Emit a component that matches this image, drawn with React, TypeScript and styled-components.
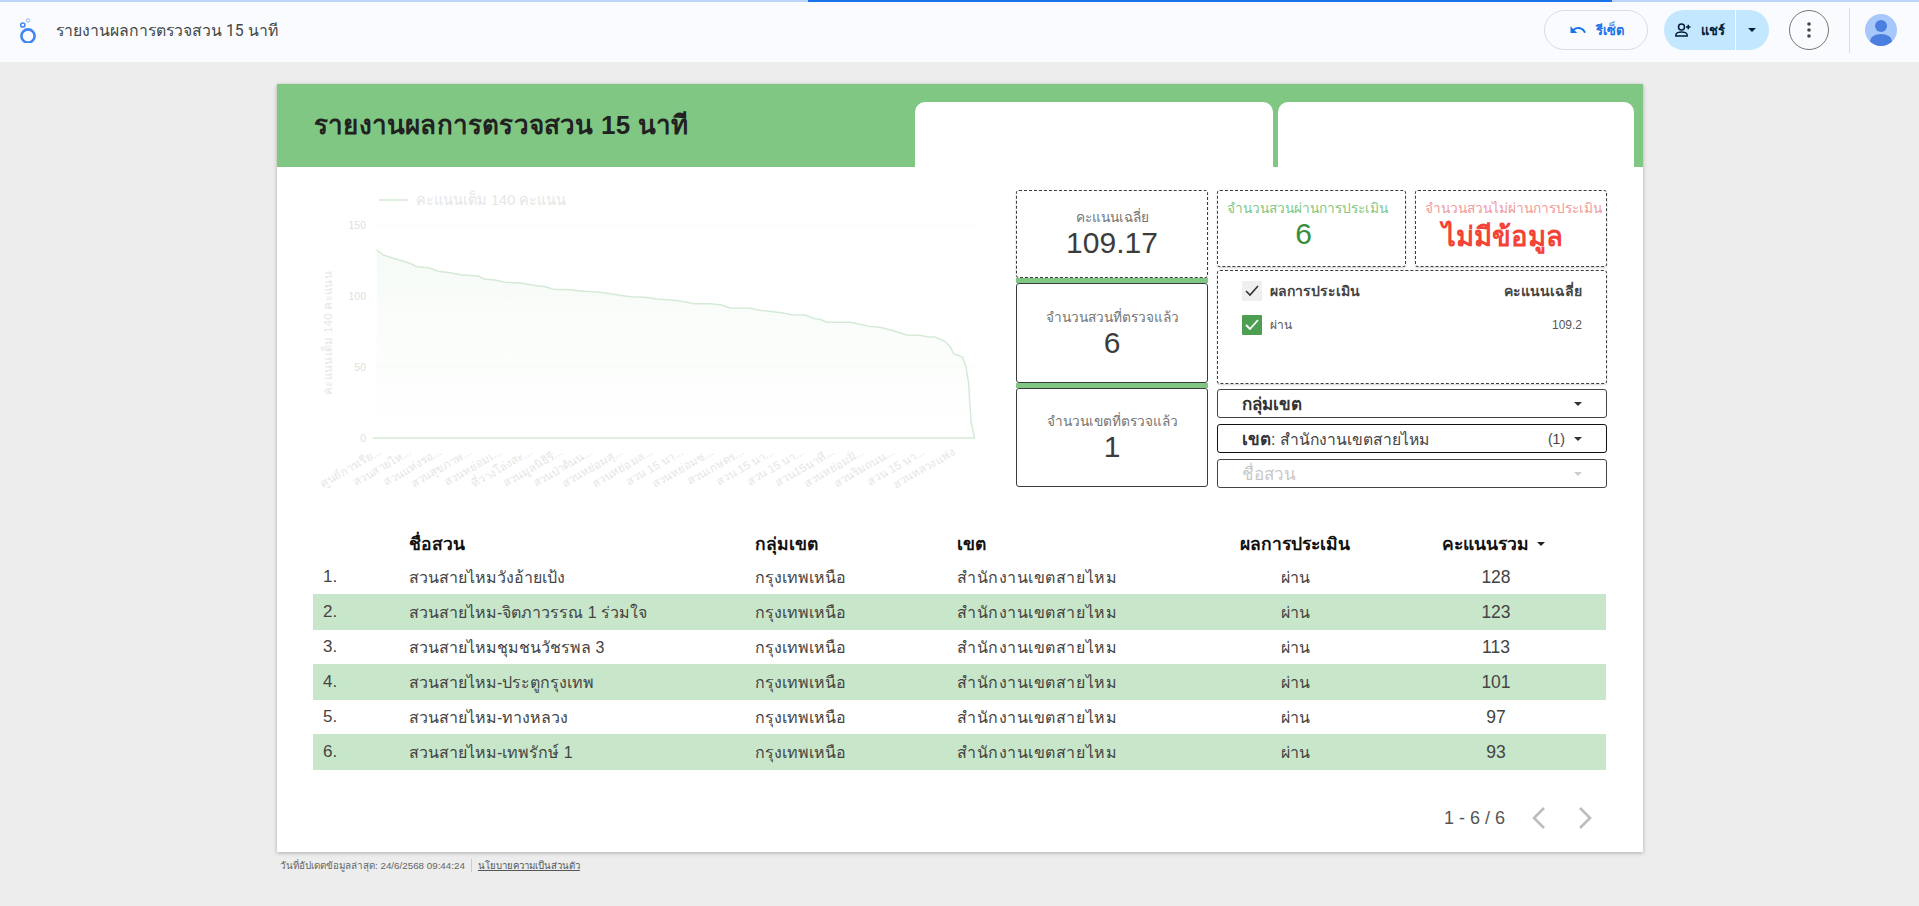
import React from "react";
import styled, { createGlobalStyle } from "styled-components";

const GlobalStyle = createGlobalStyle`
  html, body {
    margin: 0;
    padding: 0;
    height: 100%;
    overflow: hidden;
    background: #ededed;
    font-family: "Liberation Sans", Arial, sans-serif;
  }
  * {
    box-sizing: border-box;
  }
`;

const rows = [
  { name: "สวนสายไหมวังอ้ายเป้ง", score: 128 },
  { name: "สวนสายไหม-จิตภาวรรณ 1 ร่วมใจ", score: 123 },
  { name: "สวนสายไหมชุมชนวัชรพล 3", score: 113 },
  { name: "สวนสายไหม-ประตูกรุงเทพ", score: 101 },
  { name: "สวนสายไหม-ทางหลวง", score: 97 },
  { name: "สวนสายไหม-เทพรักษ์ 1", score: 93 },
];

const axisLabels = [
  "ศูนย์การเรีย...",
  "สวนสายไห...",
  "สวนแห่งรอ...",
  "สวนสุขภาพ...",
  "สวนหย่อมเ...",
  "ที่ว่างโล่งสะ...",
  "สวนมูลนิธิรี...",
  "สวนป่าต้นน...",
  "สวนหย่อมสุ...",
  "สวนหย่อมล...",
  "สวน 15 นา...",
  "สวนหย่อมซ...",
  "สวนเกษตร...",
  "สวน 15 นา...",
  "สวน 15 นา...",
  "สวน15นาที...",
  "สวนหย่อมฝั่...",
  "สวนริมถนน...",
  "สวน 15 นา...",
  "สวนหลวงแพ่ง",
];

// curve read off the reference at 3x, then moved into svg coordinates
const curveLeft: [number, number][] = [
  [20, 30], [40, 45], [70, 55], [120, 70], [140, 80], [175, 83], [205, 94], [245, 99],
  [275, 105], [325, 108], [345, 118], [375, 120], [405, 127], [445, 128], [490, 136],
  [525, 140], [550, 148], [600, 149], [640, 154], [690, 157], [740, 164], [780, 170],
  [825, 172], [860, 177], [905, 180],
];
const curveRight: [number, number][] = [
  [0, 63], [45, 71], [90, 71], [125, 75], [150, 84], [210, 85], [240, 91], [280, 95],
  [310, 99], [335, 104], [375, 105], [405, 116], [420, 118], [440, 127], [510, 127],
  [540, 133], [565, 139], [600, 142], [640, 152], [680, 165], [720, 166], [740, 170],
  [765, 171], [795, 184], [810, 200], [822, 222], [835, 226], [848, 232], [858, 260],
  [866, 310], [870, 380], [874, 430], [884, 475],
];
const curve = [
  ...curveLeft.map(([x, y]) => [60 + x / 3, 50 + y / 3]),
  ...curveRight.map(([x, y]) => [370 + x / 3, 90 + y / 3]),
];

const linePath = curve
  .map(([x, y], i) => `${i ? "L" : "M"}${x.toFixed(1)} ${y.toFixed(1)}`)
  .join(" ");
const areaPath = `${linePath} L66.7 248 Z`;

const PageRoot = styled.div`
  height: 906px;
  display: flex;
  flex-direction: column;
`;

const TopBar = styled.header`
  position: relative;
  height: 62px;
  flex: none;
  display: flex;
  align-items: center;
  padding: 0 22px 2px 18px;
  background: #f9fbfe;
`;

const Progress = styled.div`
  position: absolute;
  top: 0;
  left: 0;
  right: 0;
  height: 2px;
  background: linear-gradient(
    to right,
    #bcd5f9 0,
    #bcd5f9 808px,
    #1a73e8 808px,
    #1a73e8 1612px,
    #bcd5f9 1612px
  );
`;

const ReportName = styled.h1`
  flex: 1;
  margin: 0 0 0 18px;
  font: 400 15.8px Roboto, "Liberation Sans", sans-serif;
  color: #444746;
`;

const ResetButton = styled.button`
  width: 104px;
  height: 40px;
  display: flex;
  align-items: center;
  justify-content: center;
  gap: 9px;
  padding: 0;
  border: 1px solid #dadce0;
  border-radius: 20px;
  background: transparent;
  font: 700 13px Roboto, "Liberation Sans", sans-serif;
  color: #1a73e8;
`;

const ShareGroup = styled.div`
  width: 105px;
  height: 40px;
  margin-left: 16px;
  display: flex;
  border-radius: 20px;
  overflow: hidden;
  background: #c2e7ff;
`;

const ShareMain = styled.div`
  width: 72px;
  display: flex;
  align-items: center;
  justify-content: flex-end;
  gap: 9px;
  padding-right: 10px;
  border-right: 1px solid #f9fbfe;
  font: 700 13px Roboto, "Liberation Sans", sans-serif;
  color: #001d35;
`;

const ShareCaret = styled.div`
  flex: 1;
  display: flex;
  align-items: center;
  justify-content: center;
  padding-right: 2px;
`;

const MoreButton = styled.div`
  width: 40px;
  height: 40px;
  margin-left: 20px;
  display: flex;
  align-items: center;
  justify-content: center;
  border: 1px solid #747775;
  border-radius: 50%;
`;

const BarDivider = styled.div`
  width: 1px;
  height: 45px;
  margin: 0 15px 0 20px;
  background: #dadce0;
`;

const Main = styled.main`
  flex: 1;
  padding: 22px 0 0 277px;
`;

const Card = styled.section`
  width: 1366px;
  height: 768px;
  background: #fff;
  box-shadow: 0 1px 4px rgba(0, 0, 0, 0.28);
`;

const Banner = styled.div`
  height: 83px;
  display: flex;
  background: #81c784;
  padding-right: 9px;
`;

const BannerTitle = styled.h2`
  flex: 1;
  margin: 0;
  padding: 21px 0 0 37px;
  font-size: 26px;
  line-height: 40px;
  font-weight: 700;
  letter-spacing: 0.2px;
  color: #212121;
`;

const BannerTab = styled.div<{ $width: number }>`
  width: ${(p) => p.$width}px;
  margin: 18px 0 0 5px;
  background: #fff;
  border-radius: 10px 10px 0 0;
`;

const Body = styled.div`
  display: flex;
  padding: 23px 0 0 33px;
`;

const ChartSvg = styled.svg`
  display: block;
  width: 690px;
  height: 320px;
  flex: none;
`;

const Stats = styled.div`
  margin-left: 16px;
  display: flex;
  gap: 9px;
`;

const LeftStats = styled.div`
  width: 192px;
  display: flex;
  flex-direction: column;
`;

const GreenStrip = styled.div`
  height: 5px;
  background: #81c784;
`;

const StatBox = styled.div<{ $height: number; $dashed?: boolean }>`
  height: ${(p) => p.$height}px;
  display: flex;
  flex-direction: column;
  align-items: center;
  justify-content: center;
  padding-top: ${(p) => (p.$dashed ? 1 : 3)}px;
  border: 1px ${(p) => (p.$dashed ? "dashed" : "solid")} #3c3c3c;
  border-radius: 3px;
  background: #fff;
  box-shadow: ${(p) => (p.$dashed ? "0 1px 2px rgba(0,0,0,.18)" : "none")};
`;

const TopBox = styled.div<{ $width: number }>`
  width: ${(p) => p.$width}px;
  height: 77px;
  display: flex;
  flex-direction: column;
  align-items: center;
  padding-top: 10px;
  border: 1px dashed #3c3c3c;
  border-radius: 3px;
  background: #fff;
  box-shadow: 0 1px 2px rgba(0, 0, 0, 0.18);
`;

const StatLabel = styled.div<{ $color?: string; $shift?: number }>`
  font-size: 13.7px;
  line-height: 16px;
  white-space: nowrap;
  color: ${(p) => p.$color || "#757575"};
  transform: translateX(${(p) => p.$shift || 0}px);
`;

const StatValue = styled.div<{
  $color?: string;
  $bold?: boolean;
  $size?: number;
  $shift?: number;
  $top?: number;
}>`
  margin-top: ${(p) => p.$top || 0}px;
  font-size: ${(p) => p.$size || 30}px;
  line-height: 34px;
  font-weight: ${(p) => (p.$bold ? 700 : 400)};
  color: ${(p) => p.$color || "#3c3c3c"};
  transform: translateX(${(p) => p.$shift || 0}px);
`;

const RightStats = styled.div`
  width: 390px;
  display: flex;
  flex-direction: column;
`;

const TopStats = styled.div`
  display: flex;
  gap: 9px;
  margin-bottom: 3px;
`;

const LegendBox = styled.div`
  height: 114px;
  padding: 2px 24px 0 24px;
  border: 1px dashed #3c3c3c;
  border-radius: 3px;
  box-shadow: 0 1px 2px rgba(0, 0, 0, 0.18);
  margin-bottom: 5px;
`;

const LegendRow = styled.div<{ $head?: boolean }>`
  height: ${(p) => (p.$head ? 35 : 33)}px;
  display: flex;
  align-items: center;
  font-size: ${(p) => (p.$head ? 14 : 12)}px;
  font-weight: ${(p) => (p.$head ? 700 : 400)};
  color: ${(p) => (p.$head ? "#444" : "#555")};
`;

const CheckBox = styled.span<{ $on?: boolean }>`
  width: 20px;
  height: 20px;
  margin-right: 8px;
  flex: none;
  display: flex;
  align-items: center;
  justify-content: center;
  border-radius: 1px;
  background: ${(p) => (p.$on ? "#4c9f50" : "#efefef")};
`;

const LegendName = styled.span`
  flex: 1;
`;

const FilterBox = styled.div<{ $strong?: boolean; $muted?: boolean }>`
  height: 29px;
  margin-bottom: 6px;
  display: flex;
  align-items: center;
  padding: 0 24px 0 24px;
  border: ${(p) => (p.$strong ? "1.5px solid #111" : "1px solid #444")};
  border-radius: 3px;
  font-size: 15.7px;
  color: ${(p) => (p.$muted ? "#c8c8c8" : "#444")};
`;

const FilterText = styled.span`
  flex: 1;
  white-space: nowrap;
`;

const FilterStrong = styled.strong<{ $plain?: boolean }>`
  font-weight: ${(p) => (p.$plain ? 400 : 700)};
  font-size: 17px;
  color: ${(p) => (p.$plain ? "#c8c8c8" : "#333")};
`;

const FilterCount = styled.span`
  margin-right: 9px;
  font-size: 14px;
`;

const Caret = styled.span<{ $color?: string }>`
  width: 0;
  height: 0;
  border-left: 4px solid transparent;
  border-right: 4px solid transparent;
  border-top: 4px solid ${(p) => p.$color || "#333"};
`;

const Table = styled.div`
  width: 1293px;
  margin: 18px 0 0 36px;
`;

const TableRow = styled.div<{ $even?: boolean; $head?: boolean }>`
  height: ${(p) => (p.$head ? 32 : p.$even ? 36 : 34)}px;
  display: grid;
  grid-template-columns: 96px 346px 202px 243px 190px 212px;
  align-items: center;
  font-size: 16px;
  color: #444;
  background: ${(p) => (p.$even ? "#c8e6c9" : "transparent")};
`;

const HeadCell = styled.div<{ $center?: boolean; $sorted?: boolean }>`
  font-size: 17.5px;
  font-weight: 700;
  color: #111;
  display: flex;
  gap: 8px;
  align-items: center;
  justify-content: ${(p) => (p.$center ? "center" : "flex-start")};
  padding-right: ${(p) => (p.$sorted ? 5 : 0)}px;
`;

const IndexCell = styled.div`
  padding-left: 10px;
  font-size: 17px;
`;

const DistrictCell = styled.div`
  letter-spacing: 0.55px;
`;

const CenterCell = styled.div<{ $number?: boolean }>`
  text-align: center;
  font-size: ${(p) => (p.$number ? 17.5 : 16)}px;
`;

const Pager = styled.div`
  width: 1293px;
  height: 40px;
  margin: 28px 0 0 36px;
  display: flex;
  align-items: center;
  justify-content: flex-end;
  gap: 28px;
  padding-right: 12px;
  font-size: 18px;
  color: #555;
`;

const PagerText = styled.span`
  margin-right: -3px;
`;

const Footnote = styled.footer`
  width: 600px;
  margin: 7px 0 0 3px;
  display: flex;
  align-items: center;
  font-size: 9.8px;
  line-height: 13px;
  color: #666;
`;

const FootLink = styled.a`
  margin-left: 6px;
  padding-left: 6px;
  border-left: 1px solid #ccc;
  color: #555;
  font-size: 9.6px;
  text-decoration: underline;
`;

const Chevron = ({ flip }: { flip?: boolean }) => (
  <svg width="18" height="24" viewBox="0 0 18 24" fill="none">
    <path
      d={flip ? "M4 2 L14 12 L4 22" : "M14 2 L4 12 L14 22"}
      stroke="#bdbdbd"
      strokeWidth="2.6"
    />
  </svg>
);

const Chart = () => (
  <ChartSvg viewBox="0 0 690 320">
    <defs>
      <linearGradient id="areaFill" x1="0" y1="0" x2="0" y2="1">
        <stop offset="0" stopColor="#81c784" stopOpacity="0.07" />
        <stop offset="1" stopColor="#81c784" stopOpacity="0" />
      </linearGradient>
    </defs>
    <line x1="69" y1="10" x2="98" y2="10" stroke="#d5ead6" strokeWidth="1.5" />
    <text x="106" y="15" fontSize="14.5" fill="#e6e6e6">
      คะแนนเต็ม 140 คะแนน
    </text>
    {[
      [150, 35],
      [100, 106],
      [50, 177],
      [0, 248],
    ].map(([v, y]) => (
      <g key={v}>
        <text x="56" y={y + 4} fontSize="10.5" textAnchor="end" fill="#e0e0e0">
          {v}
        </text>
        <line x1="63" y1={y} x2="665" y2={y} stroke="#fbfbfb" />
      </g>
    ))}
    <text
      fontSize="11.5"
      letterSpacing="0.3"
      fill="#e6e6e6"
      textAnchor="middle"
      transform="translate(22 143) rotate(-90)"
    >
      คะแนนเต็ม 140 คะแนน
    </text>
    <path d={areaPath} fill="url(#areaFill)" />
    <path d={linePath} fill="none" stroke="#d5ead6" strokeWidth="1.5" />
    <line x1="63" y1="248" x2="665" y2="248" stroke="#d5ead6" strokeWidth="1.5" />
    {axisLabels.map((label, i) => (
      <text
        key={i}
        fontSize="11.5"
        fill="#e6e6e6"
        textAnchor="end"
        transform={`translate(${72 + i * 30.2} 264) rotate(-30)`}
      >
        {label}
      </text>
    ))}
  </ChartSvg>
);

const App = () => {
  return (
    <PageRoot>
      <GlobalStyle />
      <TopBar>
        <Progress />
        <svg width="20" height="26" viewBox="0 0 20 26" fill="none">
          <circle cx="10" cy="19" r="6.6" stroke="#4285f4" strokeWidth="2.6" />
          <circle cx="4.8" cy="8" r="2.1" stroke="#4285f4" strokeWidth="1.5" />
          <circle cx="10" cy="3.5" r="1.6" stroke="#8ab4f8" strokeWidth="1" />
        </svg>
        <ReportName>รายงานผลการตรวจสวน 15 นาที</ReportName>
        <ResetButton>
          <svg width="18" height="18" viewBox="0 0 24 24" fill="#1a73e8">
            <path d="M12.5 8c-2.65 0-5.05 1-6.9 2.6L2 7v9h9l-3.62-3.62C8.77 11.2 10.54 10.5 12.5 10.5c3.54 0 6.55 2.31 7.6 5.5l2.37-.78C21.08 11.03 17.15 8 12.5 8z" />
          </svg>
          รีเซ็ต
        </ResetButton>
        <ShareGroup>
          <ShareMain>
            <svg width="18" height="18" viewBox="0 0 24 24" fill="none" stroke="#001d35" strokeWidth="2">
              <circle cx="10" cy="8" r="4" />
              <path d="M2.5 20v-1.5c0-2.5 4-4 7.5-4s7.5 1.5 7.5 4V20z" />
              <path d="M19 5v6M16 8h6" />
            </svg>
            แชร์
          </ShareMain>
          <ShareCaret>
            <Caret $color="#001d35" />
          </ShareCaret>
        </ShareGroup>
        <MoreButton>
          <svg width="4" height="16" viewBox="0 0 4 16" fill="#444746">
            <circle cx="2" cy="2" r="1.8" />
            <circle cx="2" cy="8" r="1.8" />
            <circle cx="2" cy="14" r="1.8" />
          </svg>
        </MoreButton>
        <BarDivider />
        <svg width="32" height="32" viewBox="0 0 32 32">
          <defs>
            <clipPath id="avatarClip">
              <circle cx="16" cy="16" r="16" />
            </clipPath>
          </defs>
          <circle cx="16" cy="16" r="16" fill="#a8c7fa" />
          <g clipPath="url(#avatarClip)" fill="#4a7fe0">
            <circle cx="16" cy="12" r="6" />
            <ellipse cx="16" cy="27" rx="11" ry="7" />
          </g>
        </svg>
      </TopBar>
      <Main>
        <Card>
          <Banner>
            <BannerTitle>รายงานผลการตรวจสวน 15 นาที</BannerTitle>
            <BannerTab $width={358} />
            <BannerTab $width={356} />
          </Banner>
          <Body>
            <Chart />
            <Stats>
              <LeftStats>
                <StatBox $height={88} $dashed>
                  <StatLabel>คะแนนเฉลี่ย</StatLabel>
                  <StatValue>109.17</StatValue>
                </StatBox>
                <GreenStrip />
                <StatBox $height={100}>
                  <StatLabel>จำนวนสวนที่ตรวจแล้ว</StatLabel>
                  <StatValue>6</StatValue>
                </StatBox>
                <GreenStrip />
                <StatBox $height={99}>
                  <StatLabel>จำนวนเขตที่ตรวจแล้ว</StatLabel>
                  <StatValue>1</StatValue>
                </StatBox>
              </LeftStats>
              <RightStats>
                <TopStats>
                  <TopBox $width={189}>
                    <StatLabel $color="#81c784" $shift={-4}>
                      จำนวนสวนผ่านการประเมิน
                    </StatLabel>
                    <StatValue $color="#388e3c" $shift={-8}>
                      6
                    </StatValue>
                  </TopBox>
                  <TopBox $width={192}>
                    <StatLabel $color="#ef9a9a" $shift={2}>
                      จำนวนสวนไม่ผ่านการประเมิน
                    </StatLabel>
                    <StatValue $color="#f44336" $bold $size={27.5} $shift={-9} $top={3}>
                      ไม่มีข้อมูล
                    </StatValue>
                  </TopBox>
                </TopStats>
                <LegendBox>
                  <LegendRow $head>
                    <CheckBox>
                      <svg width="14" height="12" viewBox="0 0 14 12" fill="none">
                        <path d="M1 6 L5 10 L13 1" stroke="#333" strokeWidth="1.6" />
                      </svg>
                    </CheckBox>
                    <LegendName>ผลการประเมิน</LegendName>
                    คะแนนเฉลี่ย
                  </LegendRow>
                  <LegendRow>
                    <CheckBox $on>
                      <svg width="14" height="12" viewBox="0 0 14 12" fill="none">
                        <path d="M1 6 L5 10 L13 1" stroke="#fff" strokeWidth="1.8" />
                      </svg>
                    </CheckBox>
                    <LegendName>ผ่าน</LegendName>
                    109.2
                  </LegendRow>
                </LegendBox>
                <FilterBox>
                  <FilterText>
                    <FilterStrong>กลุ่มเขต</FilterStrong>
                  </FilterText>
                  <Caret />
                </FilterBox>
                <FilterBox $strong>
                  <FilterText>
                    <FilterStrong>เขต</FilterStrong>: สำนักงานเขตสายไหม
                  </FilterText>
                  <FilterCount>(1)</FilterCount>
                  <Caret />
                </FilterBox>
                <FilterBox $muted>
                  <FilterText>
                    <FilterStrong $plain>ชื่อสวน</FilterStrong>
                  </FilterText>
                  <Caret $color="#ccc" />
                </FilterBox>
              </RightStats>
            </Stats>
          </Body>
          <Table>
            <TableRow $head>
              <span />
              <HeadCell>ชื่อสวน</HeadCell>
              <HeadCell>กลุ่มเขต</HeadCell>
              <HeadCell>เขต</HeadCell>
              <HeadCell $center>ผลการประเมิน</HeadCell>
              <HeadCell $center $sorted>
                คะแนนรวม
                <Caret $color="#222" />
              </HeadCell>
            </TableRow>
            {rows.map((row, i) => (
              <TableRow key={row.name} $even={i % 2 === 1}>
                <IndexCell>{i + 1}.</IndexCell>
                <div>{row.name}</div>
                <div>กรุงเทพเหนือ</div>
                <DistrictCell>สำนักงานเขตสายไหม</DistrictCell>
                <CenterCell>ผ่าน</CenterCell>
                <CenterCell $number>{row.score}</CenterCell>
              </TableRow>
            ))}
          </Table>
          <Pager>
            <PagerText>1 - 6 / 6</PagerText>
            <Chevron />
            <Chevron flip />
          </Pager>
        </Card>
        <Footnote>
          วันที่อัปเดตข้อมูลล่าสุด: 24/6/2568 09:44:24
          <FootLink>นโยบายความเป็นส่วนตัว</FootLink>
        </Footnote>
      </Main>
    </PageRoot>
  );
};

export default App;
